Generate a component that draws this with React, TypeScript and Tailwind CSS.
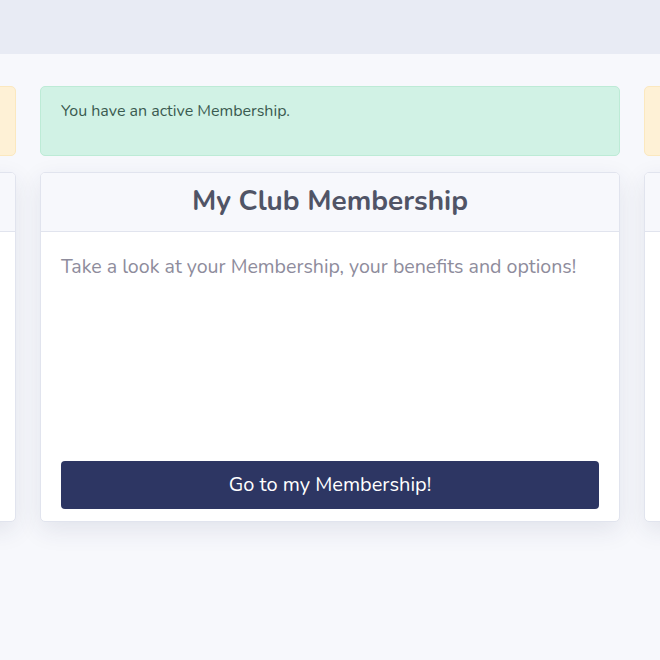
const font = { fontFamily: '"Nunito", "Lato", "Open Sans", sans-serif' }

const SideColumn = ({ tone }: { tone: string }) => (
    <div className="w-[580px] shrink-0 flex flex-col gap-4">
        <div className={`h-[70px] rounded-[5px] border ${tone}`} />
        <div className="h-[350px] rounded-[5px] border border-[#e1e4ee] bg-white shadow-[0_8px_24px_rgba(40,50,90,0.10)] overflow-hidden">
            <div className="h-[59px] bg-[#f7f8fc] border-b border-[#e1e4ee]" />
        </div>
    </div>
)

export default function App() {
    return (
        <div className="w-[660px] h-[660px] bg-[#f7f8fc] overflow-hidden" style={font}>
            <div className="h-[54px] bg-[#e8ebf4]" />
            <div className="flex justify-center gap-6 pt-8">
                <SideColumn tone="bg-[#fef1d6] border-[#fbe8bf]" />
                <div className="w-[580px] shrink-0 flex flex-col gap-4">
                    <div className="h-[70px] rounded-[5px] border border-[#bdebd6] bg-[#d1f2e5] px-5 pt-[12px] text-[16px] text-[#3a5a50]">
                        You have an active Membership.
                    </div>
                    <div className="h-[350px] rounded-[5px] border border-[#e1e4ee] bg-white shadow-[0_8px_24px_rgba(40,50,90,0.10)] flex flex-col overflow-hidden">
                        <div className="h-[59px] bg-[#f7f8fc] border-b border-[#e1e4ee] flex items-center justify-center">
                            <h2 className="text-[28px] font-bold text-[#505466] -mt-[2px]">My Club Membership</h2>
                        </div>
                        <div className="flex-1 flex flex-col px-5 pt-[20px] pb-3">
                            <p className="text-[19.6px] text-[#8e8c9c]">
                                Take a look at your Membership, your benefits and options!
                            </p>
                            <button className="mt-auto h-[48px] w-full rounded-[4px] bg-[#2d3663] text-white text-[20px]">
                                Go to my Membership!
                            </button>
                        </div>
                    </div>
                </div>
                <SideColumn tone="bg-[#fef1d6] border-[#fbe8bf]" />
            </div>
        </div>
    )
}
